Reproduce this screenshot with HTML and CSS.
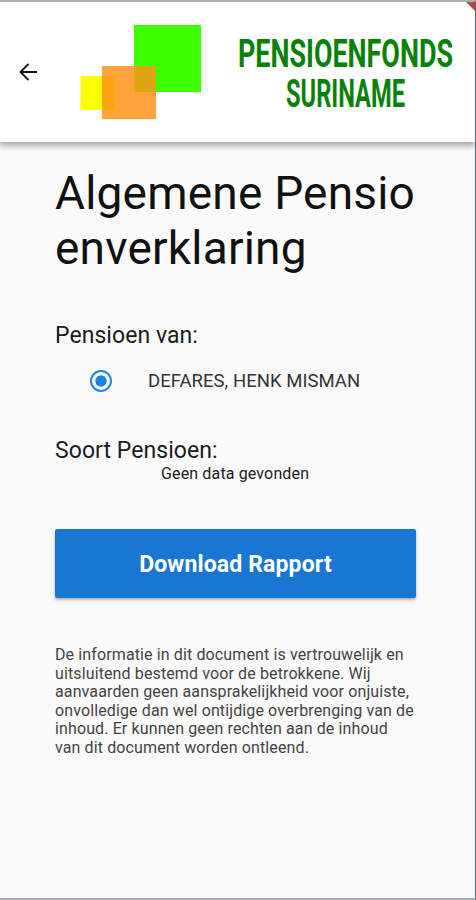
FILE: index.html
```html
<!DOCTYPE html>
<html lang="nl">
<head>
  <meta charset="UTF-8">
  <meta name="viewport" content="width=device-width, initial-scale=1.0">
  <title>Algemene Pensioenverklaring</title>
  <link rel="stylesheet" href="styles.css">
</head>
<body>
  <div class="app">
    <!-- Header with back button and logo -->
    <header class="app-bar">
      <button class="back-btn" aria-label="Terug">
        <svg width="18" height="18" viewBox="0 0 18 18" fill="none" stroke="#111" stroke-width="1.9">
          <path d="M18 9H1.5M9.6 .9L1.5 9l8.1 8.1"/>
        </svg>
      </button>
      <svg class="logo" width="122" height="95" viewBox="0 0 122 95">
        <rect x="54" y="0" width="67" height="67" fill="#3cff00"/>
        <rect x="0.5" y="51" width="34" height="34" fill="#ffff00"/>
        <rect x="22" y="41" width="54" height="53" fill="#ff9214" fill-opacity="0.84"/>
      </svg>
      <svg class="logo-text" width="220" height="100" viewBox="0 0 308 100" preserveAspectRatio="none">
        <text x="1.4" y="44" textLength="301" lengthAdjust="spacingAndGlyphs">PENSIOENFONDS</text>
        <text x="68.6" y="84" textLength="166.6" lengthAdjust="spacingAndGlyphs">SURINAME</text>
      </svg>
      <span class="banner"></span>
    </header>

    <main class="content">
      <h1>Algemene Pensio<br>enverklaring</h1>

      <h2>Pensioen van:</h2>
      <label class="option">
        <span class="radio"></span>
        <span class="option-name">DEFARES, HENK MISMAN</span>
      </label>

      <h2 class="type-title">Soort Pensioen:</h2>
      <p class="no-data">Geen data gevonden</p>

      <button class="download-btn">Download Rapport</button>

      <p class="disclaimer">De informatie in dit document is vertrouwelijk en<br>uitsluitend bestemd voor de betrokkene. Wij<br>aanvaarden geen aansprakelijkheid voor onjuiste,<br>onvolledige dan wel ontijdige overbrenging van de<br>inhoud. Er kunnen geen rechten aan de inhoud<br>van dit document worden ontleend.</p>
    </main>
  </div>
</body>
</html>
```

FILE: styles.css
```css
* {
  box-sizing: border-box;
}

body {
  margin: 0;
  font-family: Roboto, sans-serif;
  color: #1c1c1c;
  background-color: #fafafa;
}

.app {
  height: 900px;
  overflow: hidden;
  border-top: 2px solid #b0b0b0;
  border-right: 1px solid #566070;
  border-bottom: 2px solid #a8acac;
}

/* Header */
.app-bar {
  position: relative;
  display: flex;
  align-items: flex-start;
  height: 140px;
  padding-left: 19px;
  background-color: #fff;
  box-shadow: 0 2px 7px 1px rgba(0, 0, 0, 0.4);
}

.back-btn {
  display: flex;
  margin-top: 61px;
  padding: 0;
  border: none;
  background: none;
  cursor: pointer;
}

.logo {
  margin-top: 23px;
  margin-left: 43px;
}

.logo-text {
  margin-top: 21px;
  margin-left: 35px;
  font-size: 38px;
  font-weight: bold;
  fill: #078207;
}

/* Corner ribbon */
.banner {
  position: absolute;
  top: -2px;
  right: 0;
  width: 11px;
  height: 11px;
  background-color: #b5484d;
  clip-path: polygon(0 0, 100% 0, 100% 100%);
}

/* Page content */
.content {
  padding: 24px 59px 0 55px;
}

h1 {
  margin: 0;
  font-size: 46px;
  font-weight: normal;
  line-height: 55px;
  letter-spacing: 0.2px;
  white-space: nowrap;
  color: #111;
}

h2 {
  margin: 46px 0 0;
  font-size: 23px;
  font-weight: normal;
  line-height: 28px;
  letter-spacing: 0.06px;
}

.option {
  display: flex;
  align-items: center;
  height: 24px;
  margin-top: 19px;
  padding-left: 35px;
}

.radio {
  width: 22px;
  height: 22px;
  border: 2px solid #2486e6;
  border-radius: 50%;
  background: radial-gradient(circle, #1c80e0 5.2px, transparent 6px);
}

.option-name {
  margin-left: 36px;
  font-size: 18.5px;
  letter-spacing: 0.04px;
  white-space: nowrap;
  color: #333;
}

.type-title {
  margin-top: 44px;
}

.no-data {
  margin: 0 0 0 106px;
  font-size: 16px;
  line-height: 18px;
  letter-spacing: 0.14px;
  white-space: nowrap;
}

.download-btn {
  display: block;
  width: 100%;
  height: 69px;
  margin-top: 46px;
  padding-top: 3px;
  border: none;
  border-radius: 2px;
  background-color: #1976d2;
  box-shadow: 0 2px 3px rgba(0, 0, 0, 0.3);
  color: #fff;
  font-family: inherit;
  font-size: 23px;
  font-weight: bold;
  letter-spacing: 0.14px;
  cursor: pointer;
}

.disclaimer {
  margin: 48px 0 0;
  font-size: 16px;
  line-height: 18.6px;
  letter-spacing: 0.12px;
  white-space: nowrap;
  color: #444;
}
```
